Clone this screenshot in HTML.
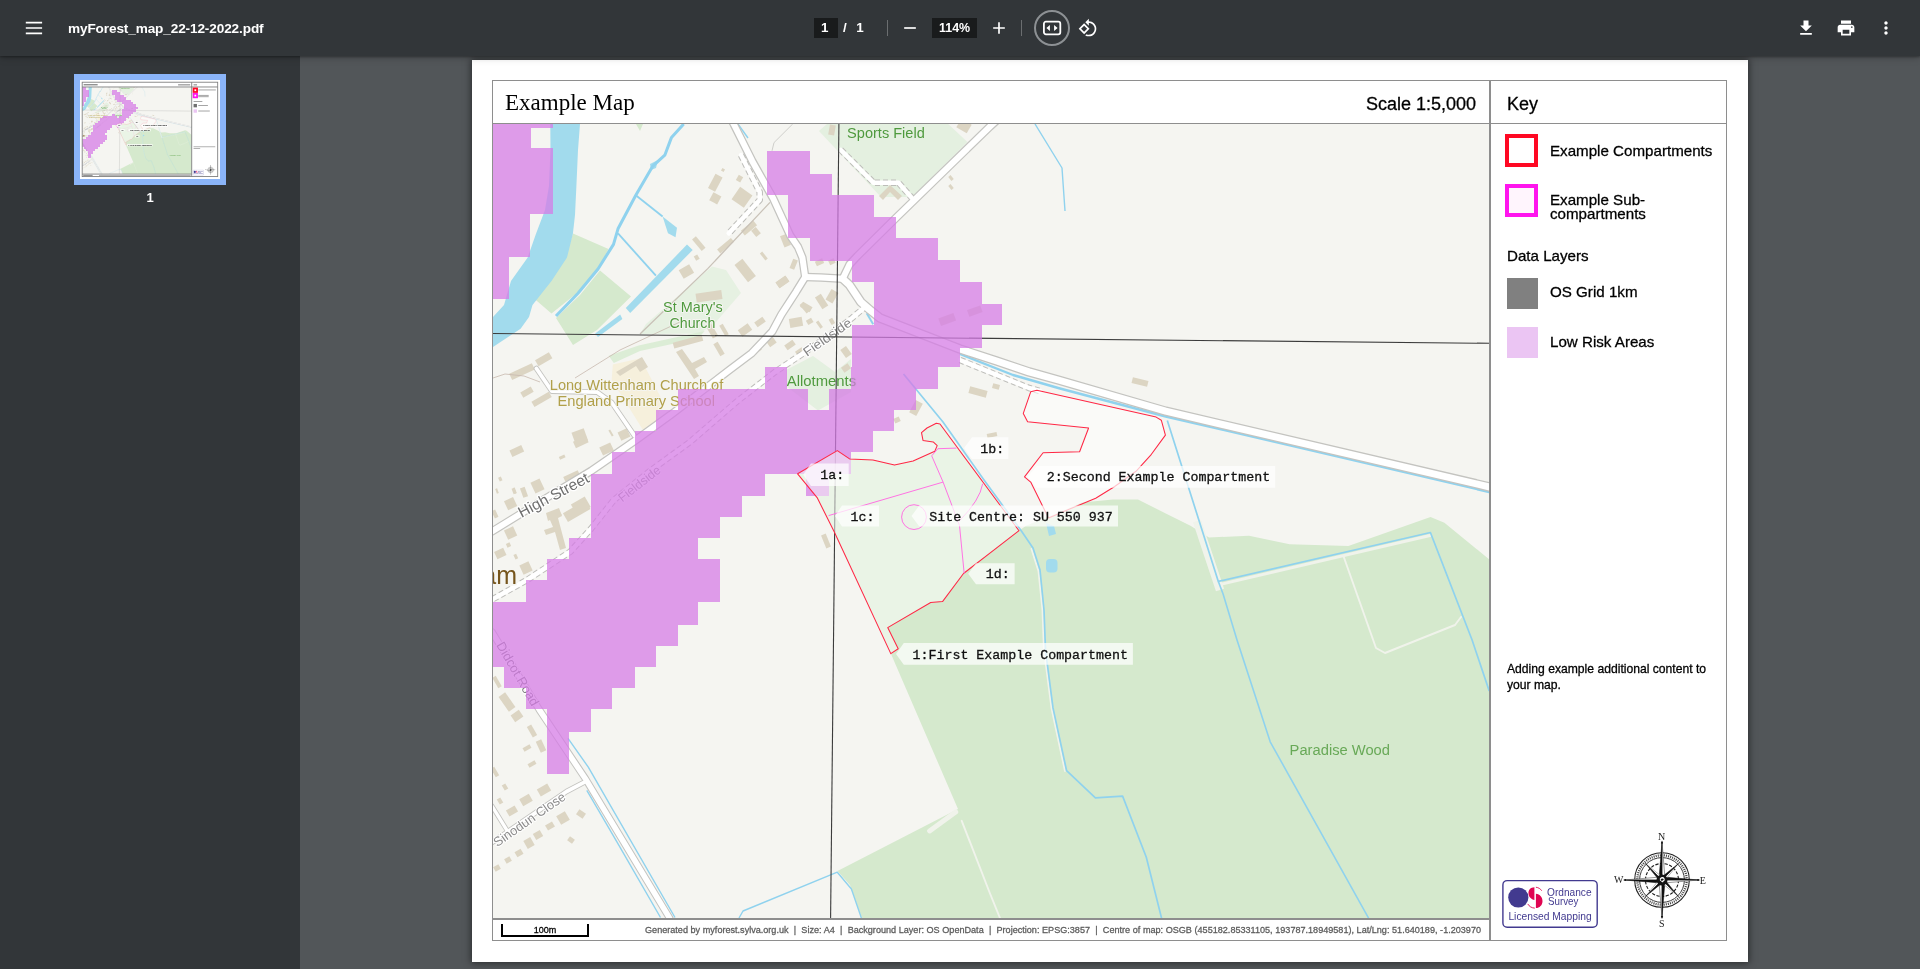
<!DOCTYPE html>
<html lang="en">
<head>
<meta charset="utf-8">
<title>myForest_map_22-12-2022.pdf</title>
<style>
html,body{margin:0;padding:0;}
#toolbar,#sidebar,#page{will-change:transform;}
body{width:1920px;height:969px;overflow:hidden;background:#525659;font-family:"Liberation Sans",sans-serif;position:relative;}
#toolbar{position:absolute;left:0;top:0;width:1920px;height:56px;background:#323639;z-index:5;box-shadow:0 -2px 8px rgba(0,0,0,.09),0 4px 8px rgba(0,0,0,.06),0 1px 2px rgba(0,0,0,.3),0 2px 6px rgba(0,0,0,.15);}
#sidebar{position:absolute;left:0;top:56px;width:300px;height:913px;background:#323639;z-index:3;}
#title{position:absolute;left:68px;top:19.600px;color:#fff;font-size:13.6px;font-weight:bold;letter-spacing:-0.12px;white-space:nowrap;line-height:18px;}
.tb{position:absolute;color:#fff;font-size:13.4px;transform-origin:0 50%;line-height:18px;white-space:nowrap;}
.box{position:absolute;background:#191b1c;}
.sep{position:absolute;width:1px;height:16px;top:20px;background:#6b6e70;}
#page{position:absolute;left:472px;top:60px;width:1276px;height:902px;background:#fff;box-shadow:0 0 7px 1px rgba(0,0,0,.5);z-index:1;}
.ln{position:absolute;background:#8e8e8e;z-index:2;}
.pt{position:absolute;color:#000;white-space:nowrap;-webkit-text-stroke-width:0.28px;}
#thumb{position:absolute;left:74px;top:18px;width:140px;height:99px;border:6px solid #8ab4f8;background:#fff;}
#thumbnum{position:absolute;left:0;top:134px;width:300px;text-align:center;color:#fff;font-size:13px;font-weight:bold;line-height:16px;}
</style>
</head>
<body>

<!-- ================= TOOLBAR ================= -->
<div id="toolbar">
  <svg style="position:absolute;left:0;top:0" width="60" height="56" viewBox="0 0 60 56"><path d="M25.800 21.700h16.300v1.700h-16.300zM25.800 27.150h16.300v1.700h-16.300zM25.800 32.550h16.300v1.700h-16.300z" fill="#fff"/></svg>
  <div id="title">myForest_map_22-12-2022.pdf</div>

  <div class="box" style="left:814px;top:18px;width:24px;height:20px;"></div>
  <div class="tb" style="left:821px;top:19px;font-weight:bold;">1</div>
  <div class="tb" style="left:843px;top:19px;font-weight:bold;word-spacing:1px;">/&nbsp;&nbsp;1</div>
  <div class="sep" style="left:887px;"></div>
  <svg style="position:absolute;left:900px;top:18px" width="20" height="20" viewBox="0 0 24 24"><path d="M19 13H5v-2h14v2z" fill="#fff"/></svg>
  <div class="box" style="left:932px;top:18px;width:45px;height:20px;"></div>
  <div class="tb" style="left:938.5px;top:19px;font-weight:bold;transform:scaleX(.93);">114%</div>
  <svg style="position:absolute;left:989px;top:18px" width="20" height="20" viewBox="0 0 24 24"><path d="M19 13h-6v6h-2v-6H5v-2h6V5h2v6h6v2z" fill="#fff"/></svg>
  <div class="sep" style="left:1021px;"></div>
  <div style="position:absolute;left:1034px;top:10px;width:32px;height:32px;border:2px solid #8d9194;border-radius:50%;"></div>
  <svg style="position:absolute;left:1040px;top:16px" width="24" height="24" viewBox="0 0 24 24"><rect x="3.900" y="5.700" width="16.400" height="12.600" rx="2" fill="none" stroke="#fff" stroke-width="1.800"/><path d="M6.400 12l3.500-2.900v5.800zM17.600 12l-3.500-2.900v5.800z" fill="#fff"/></svg>
  <svg style="position:absolute;left:1078px;top:18px" width="20" height="20" viewBox="0 0 24 24"><path d="M7.340 6.410L.860 12.900l6.490 6.480 6.490-6.480-6.500-6.490zM3.690 12.900l3.660-3.660L11 12.900l-3.660 3.660-3.650-3.660zm15.670-6.260C17.610 4.880 15.300 4 13 4V.760L8.760 5 13 9.240V6c1.790 0 3.580.680 4.950 2.050 2.730 2.730 2.730 7.170 0 9.900C16.580 19.320 14.790 20 13 20c-.970 0-1.940-.210-2.840-.610l-1.490 1.490C10.020 21.620 11.510 22 13 22c2.300 0 4.610-.880 6.360-2.640 3.520-3.510 3.520-9.210 0-12.720z" fill="#fff"/></svg>

  <svg style="position:absolute;left:1796px;top:18px" width="20" height="20" viewBox="0 0 24 24"><path d="M19 9h-4V3H9v6H5l7 7 7-7zM5 18v2h14v-2H5z" fill="#fff"/></svg>
  <svg style="position:absolute;left:1836px;top:18px" width="20" height="20" viewBox="0 0 24 24"><path d="M19 8H5c-1.660 0-3 1.340-3 3v6h4v4h12v-4h4v-6c0-1.660-1.340-3-3-3zm-3 11H8v-5h8v5zm3-7c-.550 0-1-.450-1-1s.450-1 1-1 1 .450 1 1-.450 1-1 1zm-1-9H6v4h12V3z" fill="#fff"/></svg>
  <svg style="position:absolute;left:1876px;top:18px" width="20" height="20" viewBox="0 0 24 24"><path d="M12 8c1.100 0 2-.900 2-2s-.900-2-2-2-2 .900-2 2 .900 2 2 2zm0 2c-1.100 0-2 .900-2 2s.900 2 2 2 2-.900 2-2-.900-2-2-2zm0 6c-1.100 0-2 .900-2 2s.900 2 2 2 2-.900 2-2-.900-2-2-2z" fill="#fff"/></svg>
</div>

<!-- ================= SIDEBAR ================= -->
<div id="sidebar">
  <div id="thumb"><svg width="140" height="99" viewBox="472 60 1276 902" style="display:block">
  <rect x="472" y="60" width="1276" height="902" fill="#fff"/>
  <svg x="493" y="124" width="997" height="794" viewBox="493 124 997 794"><use href="#mapcontent"/></svg>
  <g fill="none" stroke="#7d7d7d" stroke-width="8">
    <rect x="492" y="80" width="1235" height="860"/>
    <path d="M492 123.500H1727M1490 80V940M492 917.500H1490"/>
  </g>
  <rect x="1507" y="137" width="32" height="32" fill="#fff" stroke="#ff0823" stroke-width="16"/>
  <rect x="1507" y="186" width="32" height="32" fill="#fff" stroke="#ff14ee" stroke-width="16"/>
  <rect x="1507" y="278" width="31" height="31" fill="#707070"/>
  <rect x="1507" y="327" width="31" height="31" fill="#ebc5f3"/>
  <g fill="#8a8a8a"><rect x="1550" y="147" width="160" height="7"/><rect x="1550" y="196" width="95" height="7"/><rect x="1550" y="209" width="95" height="7"/><rect x="1507" y="252" width="80" height="7"/><rect x="1550" y="289" width="88" height="7"/><rect x="1550" y="339" width="105" height="7"/><rect x="1507" y="666" width="198" height="6"/><rect x="1507" y="682" width="60" height="6"/><rect x="505" y="97" width="128" height="12"/><rect x="1366" y="99" width="110" height="10"/><rect x="1507" y="99" width="32" height="10"/><rect x="645" y="926" width="836" height="6"/><rect x="501" y="924" width="86" height="10"/></g>
  <svg x="1496" y="874" width="108" height="60" viewBox="0 0 108 60"><use href="#oslogo"/></svg>
  <svg x="1608.300" y="825.800" width="108" height="108" viewBox="-54 -54 108 108"><use href="#compass"/></svg>
</svg>
</div>
  <div id="thumbnum">1</div>
</div>

<!-- ================= PDF PAGE ================= -->
<div id="page">
  <!-- frame lines (page-relative coords = screen - (472,60)) -->
  <div class="ln" style="left:20px;top:20px;width:1235px;height:1px;"></div>
  <div class="ln" style="left:20px;top:880px;width:1235px;height:1px;"></div>
  <div class="ln" style="left:20px;top:20px;width:1px;height:861px;"></div>
  <div class="ln" style="left:1254px;top:20px;width:1px;height:861px;"></div>
  <div class="ln" style="left:20px;top:63px;width:1235px;height:1px;"></div>
  <div class="ln" style="left:1017.200px;top:20px;width:1.700px;height:861px;"></div>
  <div class="ln" style="left:20px;top:858px;width:998px;height:2px;"></div>

  <div class="pt" style="left:33px;top:29px;font-family:'Liberation Serif',serif;font-size:23px;line-height:28px;-webkit-text-stroke-width:0;">Example Map</div>
  <div class="pt" style="left:894px;top:33px;font-size:18px;line-height:22px;">Scale 1:5,000</div>
  <div class="pt" style="left:1035px;top:33px;font-size:18px;line-height:22px;">Key</div>

  <svg id="mapsvg" style="position:absolute;left:21px;top:64px;" width="997" height="794" viewBox="493 124 997 794">
<defs><g id="mapcontent">
<rect x="493" y="124" width="997" height="794" fill="#f5f5f1"/>
<!-- ===== land cover ===== -->
<g id="landcover">
  <!-- main woods (Paradise Wood + compartment 1) -->
  <path fill="#d5e9cd" d="M797.600 473.800L837.300 450.600L849.600 458.900L872.900 459.900L894.500 465.100L913.100 461.100L934.800 451.200L937.200 445.600L933.200 441.900L923 440.400L921.500 432.600L927 428L936.300 423.300L940 424L1019 530.700L1026 525.800L1082 502.500L1113 499.400L1138 499.400L1165.800 513.400L1190.500 525.800L1209 537.500L1249 535.700L1289.600 544.300L1348.400 545.900L1430.500 517.100L1444.400 522.700L1490 560L1490 918L862 918L850 885L837.500 871L958 809L890.800 653.600L834.200 531.700L817.100 497.600Z"/>
  <!-- riverside fields -->
  <path fill="#d5e9cd" d="M573 233.500L608.500 249L600 266L577 293L551.500 313.500L533.500 298L548 283L565 258Z"/>
  <path fill="#d5e9cd" d="M600 270.500L631 296.500L597 330L573 345L556 318L580 295Z"/>
  <path fill="#d5e9cd" d="M636 124L643 124L640 131Z"/>
  <!-- sports field -->
  <path fill="#e4f0e0" d="M819 131L827 124L948.200 124L967.400 142L912 197L881 197Z"/>
  <!-- churchyard -->
  <path fill="#e6f1e2" d="M646 324L712 266.500L726 270L741 293L716 322L700 333.500L640 334Z"/>
  <path fill="#dcedd6" d="M608.700 355.800L638.600 345.500L704.600 331L698.400 338.300L640 351L613.800 363Z"/>
  <!-- allotments -->
  <path fill="#e4f0e0" d="M786 370L813 356L835 372L851 359L851 392L818 410.500L786 386Z"/>
  <!-- school ground -->
  <path fill="#f6f0dc" d="M612.800 364.400L640.600 358.200L661.300 398.400L657.100 423.200L642.700 429.400L611.700 379.800Z"/>
</g>

<!-- ===== woodland rides (off-white) ===== -->
<g fill="none" stroke="#f0f3eb" stroke-width="1.900" stroke-linecap="round" stroke-linejoin="round">
  <path stroke-width="8.500" stroke-linecap="butt" d="M1197 521L1220 590"/>
  <path d="M1343.700 556.700L1376 648L1385 653L1455 625L1461 617"/>
  <path stroke-width="3" d="M1219.500 584.500L1430 535.500"/>
  <path d="M961.700 820.800L989.800 893L1000 918"/>
  <path d="M1031.500 549L1038.500 571L1042.500 610L1044 650L1051.500 708L1065 771"/>
  <path stroke-width="5" d="M929.600 830.900L955.700 812"/>
</g>

<!-- ===== water ===== -->
<g id="water" fill="#a2dbed" stroke="none">
  <!-- Thames -->
  <path d="M550.300 124L580 124L578 150L576.400 186L575 215L572.900 233.700L567 257.500L551.500 281L532.500 305L529 317L520.600 328.700L499 343L493 347L493 317L504 305L511 281L527.700 257.500L536 233.700L545 210L549 186L550.500 150Z"/>
  <!-- canal basin -->
  <path d="M687 244.400L692.700 250L630.200 313L625.800 308Z"/>
  <path d="M620.200 314.600L622.400 319L598 337L595.200 333.600Z"/>
  <path d="M662.600 216.500L677 227.700L675.500 237.300L668 233.300Z"/>
  <path d="M650 164L658 160L656 168L651 170Z"/>
  <rect x="1046" y="559" width="11.500" height="13.500" rx="4"/>
  <path d="M1046 523L1054 526L1056 534L1049 536Z"/>
</g>
<g id="streams" fill="none" stroke="#8fd2ee" stroke-width="1.400" stroke-linejoin="round">
  <path stroke-width="3" d="M683.700 124L671.500 137.400L664.800 155.200L652.500 166.400L635.800 195.300L618 228.800L613.500 244.400L598 269L577.800 293.500L556 316"/>
  <path stroke-width="1.800" d="M635.800 195.300L662.600 216.500"/>
  <path stroke-width="1.800" d="M618 233.300L655.900 275.600"/>
  <path d="M738 124L748 138"/>
  <path d="M1035 124L1062 168L1065 211"/>
  <!-- along SE road -->
  <path stroke-width="2" d="M866.700 313.300L873.200 324.200"/>
  <path stroke-width="2.400" d="M959.900 354L1013 375L1060 388.500L1165.700 416.500L1489.200 492"/>
  <!-- along compartment 1 NE edge, then south through wood -->
  <path stroke-width="1.700" d="M903.500 374L942.800 421.700L984 480L1021.400 531L1033 548L1040 570L1044 610L1045.500 650L1053 707.900L1066.600 770.700L1095.400 797.800L1122.600 796.100L1146.300 857.200L1161.600 918.300"/>
  <path stroke-width="1.700" d="M1167.300 420.500L1218.300 581.400L1430.400 532.500L1472.100 640L1489.200 690.900"/>
  <path stroke-width="1.600" d="M1218.300 581.400L1223 593.800L1237 640L1270.200 741.800L1368.700 918.300"/>
  <!-- Didcot road ditches -->
  <path d="M568 738.300L588.300 767.200L675 917.500"/>
  <path d="M586.800 790.300L617.200 842.300L660.500 917.500"/>
  <!-- bottom -->
  <path d="M739 918L743 911L837.300 872.200L851.400 889L861.400 918"/>
</g>

<!-- ===== buildings ===== -->
<g id="bld" fill="#dcd5c3">
  <rect x="-4" y="-8" width="8" height="16" transform="translate(715.300 182.800) rotate(28)"/>
  <rect x="-4.500" y="-4.500" width="9" height="9" transform="translate(715.300 198.300) rotate(28)"/>
  <rect x="-7.500" y="-7.500" width="15" height="15" transform="translate(742 197.300) rotate(35)"/>
  <rect x="-2.500" y="-3" width="5" height="6" transform="translate(739.500 178.700) rotate(30)"/>
  <rect x="-1.500" y="-1.500" width="3" height="3" transform="translate(723 170) rotate(30)"/>
  <rect x="-2.500" y="-7.500" width="5" height="15" transform="translate(698.800 243.700) rotate(-40)"/>
  <rect x="-6" y="-5" width="12" height="10" transform="translate(686.400 271.500) rotate(-30)"/>
  <rect x="-2" y="-2.500" width="4" height="5" transform="translate(696.700 257.700) rotate(-30)"/>
  <rect x="-2.500" y="-9" width="5" height="18" transform="translate(725.600 245.700) rotate(50)"/>
  <rect x="-3" y="-8" width="6" height="16" transform="translate(749 228) rotate(50)"/>
  <rect x="-4" y="-3" width="8" height="6" transform="translate(756 232) rotate(50)"/>
  <rect x="-5" y="-11" width="10" height="22" transform="translate(745.200 270.500) rotate(-38)"/>
  <rect x="-1.500" y="-4.500" width="3" height="9" transform="translate(763.800 256) rotate(-38)"/>
  <rect x="-6" y="-3.500" width="12" height="7" transform="translate(782.400 281.900) rotate(-35)"/>
  <rect x="-3.500" y="-6" width="7" height="12" transform="translate(785.500 240.600) rotate(-22)"/>
  <rect x="-2.500" y="-5" width="5" height="10" transform="translate(793.700 264.300) rotate(22)"/>
  <rect x="-13" y="-4.500" width="26" height="9" transform="translate(709 296.300) rotate(-8)"/>
  <rect x="-3.500" y="-7" width="7" height="14" transform="translate(821.600 301.500) rotate(-32)"/>
  <rect x="-4" y="-6" width="8" height="12" transform="translate(832 296.300) rotate(30)"/>
  <rect x="-2.500" y="-5.500" width="5" height="11" transform="translate(805 307.700) rotate(-40)"/>
  <rect x="-4" y="-2.500" width="8" height="5" transform="translate(819.500 262.300) rotate(-25)"/>
  <rect x="-3" y="-5" width="6" height="10" transform="translate(832 130) rotate(10)"/>
  <path d="M879 196L890 185L902 196L898 200L890 192L883 200Z"/>
  <rect x="-1.500" y="-2.500" width="3" height="5" transform="translate(951 178) rotate(-40)"/>
  <rect x="-1.500" y="-2.500" width="3" height="5" transform="translate(951 187) rotate(-40)"/>
  <rect x="-6" y="-5" width="12" height="10" transform="translate(964 126) rotate(30)"/>
  <rect x="-8" y="-4" width="16" height="8" transform="translate(947.200 319.600) rotate(-20)"/>
  <rect x="-7" y="-3.500" width="14" height="7" transform="translate(974.800 311.100) rotate(-20)"/>
  <!-- village west -->
  <rect x="-8" y="-3.500" width="16" height="7" transform="translate(543.700 359.200) rotate(-30)"/>
  <rect x="-12.500" y="-3.500" width="25" height="7" transform="translate(522 371.600) rotate(-25)"/>
  <rect x="-6" y="-3" width="12" height="6" transform="translate(527 392.200) rotate(-30)"/>
  <rect x="-10" y="-3" width="20" height="6" transform="translate(541.600 399.400) rotate(-30)"/>
  <rect x="-6.500" y="-6.500" width="13" height="13" transform="translate(579.800 436.600) rotate(-20)"/>
  <rect x="-6.500" y="-3.500" width="13" height="7" transform="translate(516.800 451) rotate(-25)"/>
  <rect x="-3" y="-1.500" width="6" height="3" transform="translate(562.200 457.200) rotate(-25)"/>
  <rect x="-6" y="-4.500" width="12" height="9" transform="translate(606.600 449) rotate(-25)"/>
  <rect x="-5" y="-4.500" width="10" height="9" transform="translate(624 434.500) rotate(-25)"/>
  <rect x="-1" y="-3.500" width="2" height="7" transform="translate(611 433) rotate(-30)"/>
  <rect x="-8" y="-2.500" width="16" height="5" transform="translate(571.500 475.800) rotate(-25)"/>
  <rect x="-5" y="-6" width="10" height="12" transform="translate(537.500 486) rotate(-25)"/>
  <rect x="-2.500" y="-5" width="5" height="10" transform="translate(524 492.300) rotate(-20)"/>
  <rect x="-5" y="-5" width="10" height="10" transform="translate(510.600 503.700) rotate(-25)"/>
  <rect x="-1.500" y="-2" width="3" height="4" transform="translate(500.300 479) rotate(-25)"/>
  <rect x="-1" y="-2.500" width="2" height="5" transform="translate(497 491) rotate(-20)"/>
  <rect x="-1.500" y="-3" width="3" height="6" transform="translate(514 491) rotate(-20)"/>
  <rect x="-8" y="-6" width="16" height="12" transform="translate(580.800 505.700) rotate(-30)"/>
  <rect x="-5" y="-3" width="10" height="6" transform="translate(556 515) rotate(-30)"/>
  <!-- school + north of high street -->
  <path d="M616 372L642 357L648 367L640 372L636 366L620 376Z"/>
  <rect x="-15" y="-3" width="30" height="6" transform="translate(688 341.700) rotate(-15)"/>
  <rect x="-2.500" y="-7" width="5" height="14" transform="translate(719 349) rotate(-30)"/>
  <path d="M676 352L682 349L692 363L704 357L707 362L695 369L699 376L694 379Z"/>
  <rect x="-3" y="-7" width="6" height="14" transform="translate(712 331) rotate(-30)"/>
  <rect x="-2" y="-6" width="4" height="12" transform="translate(724 330) rotate(-30)"/>
  <rect x="-6" y="-4" width="12" height="8" transform="translate(745 330) rotate(-35)"/>
  <rect x="-5" y="-3" width="10" height="6" transform="translate(760 322) rotate(-35)"/>
  <!-- east of allotments / road -->
  <rect x="-8" y="-3" width="16" height="6" transform="translate(1140 382) rotate(14)"/>
  <rect x="-9" y="-3.500" width="18" height="7" transform="translate(978 392) rotate(15)"/>
  <rect x="-3.500" y="-2.500" width="7" height="5" transform="translate(996 386.500) rotate(15)"/>
  <rect x="-4" y="-7" width="8" height="14" transform="translate(916 408) rotate(28)"/>
  <rect x="-3" y="-2.500" width="6" height="5" transform="translate(897 420) rotate(-25)"/>
  <rect x="-5" y="-2" width="10" height="4" transform="translate(992 435) rotate(-12)"/>
  <rect x="-2.500" y="-7" width="5" height="14" transform="translate(826 541) rotate(-22)"/>

  <!-- extra: junction area -->
  <rect x="-5.500" y="-3" width="11" height="6" transform="translate(806.300 307) rotate(30)"/>
  <rect x="-6.500" y="-4.500" width="13" height="9" transform="translate(796 322.400) rotate(-10)"/>
  <rect x="-3" y="-2.500" width="6" height="5" transform="translate(809.700 321.300) rotate(-30)"/>
  <rect x="-1.500" y="-4" width="3" height="8" transform="translate(819.400 324.700) rotate(-35)"/>
  <rect x="-2" y="-3" width="4" height="6" transform="translate(831.900 321.300) rotate(-30)"/>
  <rect x="-3" y="-2.500" width="6" height="5" transform="translate(831.900 261.700) rotate(-25)"/>
  <rect x="-6" y="-3.500" width="12" height="7" transform="translate(782.500 282) rotate(-35)"/>
  <rect x="-4" y="-6" width="8" height="12" transform="translate(770 340) rotate(-35)"/>
  <rect x="-5" y="-3" width="10" height="6" transform="translate(756 350) rotate(-35)"/>
  <rect x="-5" y="-3" width="10" height="6" transform="translate(790 345) rotate(-35)"/>
  <rect x="-4" y="-3" width="8" height="6" transform="translate(800 352) rotate(-35)"/>
  <rect x="-3.500" y="-5" width="7" height="10" transform="translate(846 352) rotate(-35)"/>
  <rect x="-4" y="-3" width="8" height="6" transform="translate(846 368) rotate(-35)"/>
  <!-- extra: high street south side -->
  <rect x="-7" y="-3.500" width="14" height="7" transform="translate(580.800 442) rotate(-25)"/>
  <rect x="-13" y="-5" width="26" height="10" transform="translate(576.700 511.200) rotate(-30)"/>
  <path d="M546 513L559 508L562 516L558 518L566 548L560 550L555 532L546 535L544 530L553 527L550 520L548 521Z"/>
  <rect x="-5" y="-5" width="10" height="10" transform="translate(510.600 533) rotate(-25)"/>
  <rect x="-2" y="-2" width="4" height="4" transform="translate(508.500 545) rotate(-25)"/>
  <rect x="-5" y="-4" width="10" height="8" transform="translate(500.300 553.500) rotate(-25)"/>
  <rect x="-1.500" y="-2.500" width="3" height="5" transform="translate(515.800 556.600) rotate(-25)"/>
  <rect x="-5" y="-5" width="10" height="10" transform="translate(526 568) rotate(-25)"/>
  <rect x="-2" y="-4" width="4" height="8" transform="translate(495 514) rotate(-25)"/>
  <rect x="-1" y="-3" width="2" height="6" transform="translate(514.800 490.600) rotate(-20)"/>
  <!-- sinodun spur -->
  <!-- Didcot Road / Sinodun Close -->
  <rect x="-4" y="-9" width="8" height="18" transform="translate(507 702) rotate(-35)"/>
  <rect x="-5" y="-4" width="10" height="8" transform="translate(517 716) rotate(-35)"/>
  <rect x="-2.500" y="-6" width="5" height="12" transform="translate(532 731) rotate(-30)"/>
  <rect x="-3" y="-6" width="6" height="12" transform="translate(541 746) rotate(-25)"/>
  <rect x="-4" y="-2" width="8" height="4" transform="translate(527 748) rotate(-30)"/>
  <rect x="-4" y="-2" width="8" height="4" transform="translate(532 764) rotate(-30)"/>
  <rect x="-2" y="-6" width="4" height="12" transform="translate(497 682) rotate(-30)"/>
  <rect x="-2" y="-5" width="4" height="10" transform="translate(495 772) rotate(-30)"/>
  <rect x="-2" y="-3" width="4" height="6" transform="translate(505 787) rotate(-30)"/>
  <rect x="-6" y="-4" width="12" height="8" transform="translate(544 790) rotate(-30)"/>
  <rect x="-5.500" y="-4" width="11" height="8" transform="translate(526 800) rotate(-30)"/>
  <rect x="-5" y="-3.500" width="10" height="7" transform="translate(512 811) rotate(-30)"/>
  <rect x="-2" y="-3" width="4" height="6" transform="translate(500 801) rotate(-30)"/>
  <rect x="-5" y="-5" width="10" height="10" transform="translate(563 818) rotate(-30)"/>
  <rect x="-4" y="-3" width="8" height="6" transform="translate(550 826) rotate(-30)"/>
  <rect x="-4" y="-3.500" width="8" height="7" transform="translate(538 835) rotate(-30)"/>
  <rect x="-4" y="-4.500" width="8" height="9" transform="translate(529 843) rotate(-30)"/>
  <rect x="-3.500" y="-3" width="7" height="6" transform="translate(519 853) rotate(-30)"/>
  <rect x="-3" y="-2.500" width="6" height="5" transform="translate(508 860) rotate(-30)"/>
  <rect x="-3" y="-2.500" width="6" height="5" transform="translate(497 868) rotate(-30)"/>
  <rect x="-4" y="-3" width="8" height="6" transform="translate(581 814) rotate(35)"/>
  <rect x="-3" y="-2.500" width="6" height="5" transform="translate(571 840) rotate(35)"/>
</g>

<!-- ===== paths / tracks (thin) ===== -->
<g fill="none" stroke="#c9c2b8" stroke-width="1.300">
  <path d="M770 202.400L708 268.400L650.300 324L640 334"/>
  <path stroke="#cfcfcb" stroke-width="1" d="M792.700 124L774 142.600L772 150.800"/>
  <path stroke="#c8b9ae" stroke-width="0.800" d="M493 378L505 374L524 376L540 382"/>
  <path stroke="#c8b9ae" stroke-width="0.800" d="M575 378L620 350L680 322"/>
</g>

<!-- ===== roads ===== -->
<g id="roads" fill="none" stroke-linecap="round" stroke-linejoin="round">
  <!-- casings -->
  <g stroke="#c4c4c0">
    <path stroke-width="8.500" d="M492 531.500L553.600 493.500L591 471L634.500 441L670.700 414.800L729.200 370.200L751.500 353.400L772.300 331.500L781.400 314.500L796.100 291.800L805.200 277L802.400 257.700L798 247L790.200 235.500L773.100 198.300L752.300 161.200L733.700 124L732 121"/>
    <path stroke-width="8.500" d="M805.200 277L821.100 277.600L842.700 278.700L849.500 264.500L857.400 256L896.400 217.500L990 126.500L996 121"/>
    <path stroke-width="9.500" d="M842.700 278.700L849.500 285L860.800 302L870 310L880 318L959.900 349L996.700 361L1029 371.900L1060 380.500L1165.700 411.200L1492 487.500"/>
    <path stroke-width="7.500" d="M492 632L539.100 709.400L585.400 778.700L669.200 917.500L671 921"/>
    <path stroke-width="5.500" d="M585.400 781.600L566.600 791.500L492 842.500"/>
    <path stroke-width="5" d="M492 806L507.300 830.800"/>
    <path stroke-width="5.500" d="M634.400 435.600L611.700 402.500L597.300 392.200L551.900 391.200L536.400 368.500"/>
  </g>
  <!-- dashed-casing minor roads -->
  <g stroke="#bdbdb9" stroke-width="6.500" stroke-dasharray="5 3" stroke-linecap="butt">
    <path d="M741 155L759.700 192L759.700 200L728.700 233.400"/>
    <path d="M840.700 149.800L873.700 182.800L898.500 182.800L911.700 197.700"/>
    <path d="M493 599L527 580L570.500 551.500L591 528.800L613.900 500L650 471L690 442L737.500 401L775 372L806 351.500L838 329L852 318L863 308.800"/>
    <path d="M960 360L1029 388L1040 391"/>
  </g>
  <!-- fills -->
  <g stroke="#ffffff">
    <path stroke-width="4.500" d="M741 155L759.700 192L759.700 200L728.700 233.400"/>
    <path stroke-width="4.500" d="M840.700 149.800L873.700 182.800L898.500 182.800L911.700 197.700"/>
    <path stroke-width="4.500" d="M493 599L527 580L570.500 551.500L591 528.800L613.900 500L650 471L690 442L737.500 401L775 372L806 351.500L838 329L852 318L863 308.800"/>
    <path stroke-width="4.500" d="M960 360L1029 388L1040 391"/>
    <path stroke-width="6" d="M492 531.500L553.600 493.500L591 471L634.500 441L670.700 414.800L729.200 370.200L751.500 353.400L772.300 331.500L781.400 314.500L796.100 291.800L805.200 277L802.400 257.700L798 247L790.200 235.500L773.100 198.300L752.300 161.200L733.700 124L732 121"/>
    <path stroke-width="6" d="M805.200 277L821.100 277.600L842.700 278.700L849.500 264.500L857.400 256L896.400 217.500L990 126.500L996 121"/>
    <path stroke-width="7" d="M842.700 278.700L849.500 285L860.800 302L870 310L880 318L959.900 349L996.700 361L1029 371.900L1060 380.500L1165.700 411.200L1492 487.500"/>
    <path stroke-width="5.500" d="M492 632L539.100 709.400L585.400 778.700L669.200 917.500L671 921"/>
    <path stroke-width="3.800" d="M585.400 781.600L566.600 791.500L492 842.500"/>
    <path stroke-width="3.300" d="M492 806L507.300 830.800"/>
    <path stroke-width="3.800" d="M634.400 435.600L611.700 402.500L597.300 392.200L551.900 391.200L536.400 368.500"/>
  </g>
</g>

<!-- ===== base-map labels ===== -->
<g id="baselabels" font-family="'Liberation Sans',sans-serif" paint-order="stroke" stroke="#f5f5f1" stroke-width="2" stroke-linejoin="round">
  <text x="847.100" y="138" font-size="14.500" fill="#4f9a3e" textLength="77.700" lengthAdjust="spacingAndGlyphs" stroke="#e4f0e0">Sports Field</text>
  <text x="663.100" y="312.200" font-size="14.500" fill="#4f9a3e" textLength="59.700" lengthAdjust="spacingAndGlyphs">St Mary's</text>
  <text x="669.600" y="327.800" font-size="14.500" fill="#4f9a3e" textLength="45.700" lengthAdjust="spacingAndGlyphs">Church</text>
  <text x="786.800" y="385.700" font-size="14.500" fill="#4f9a3e" textLength="69.300" lengthAdjust="spacingAndGlyphs" stroke="#e4f0e0">Allotments</text>
  <text x="549.800" y="389.800" font-size="14.500" fill="#b1a04a" textLength="173.400" lengthAdjust="spacingAndGlyphs">Long Wittenham Church of</text>
  <text x="557.500" y="405.500" font-size="14.500" fill="#b1a04a" textLength="157.500" lengthAdjust="spacingAndGlyphs">England Primary School</text>
  <text x="1289.600" y="754.600" font-size="15.500" fill="#68a957" textLength="100.400" lengthAdjust="spacingAndGlyphs" stroke="#d5e9cd">Paradise Wood</text>
  <text x="517" y="584" font-size="25" fill="#76551c" text-anchor="end" stroke-width="3">ham</text>
  <text transform="translate(521.500 518) rotate(-28)" font-size="15.500" fill="#6f6f6f" textLength="78" lengthAdjust="spacingAndGlyphs" stroke="#ffffff" stroke-width="2.500">High Street</text>
  <text transform="translate(807 357) rotate(-35)" font-size="13" fill="#858585" textLength="56" lengthAdjust="spacingAndGlyphs" stroke="#ffffff">Fieldside</text>
  <text transform="translate(642 487) rotate(-38)" font-size="12.500" fill="#9a9a9a" text-anchor="middle" stroke="#ffffff">Fieldside</text>
  <text transform="translate(514 676) rotate(60)" font-size="13" fill="#7a7a7a" text-anchor="middle" stroke="#ffffff">Didcot Road</text>
  <text transform="translate(532 823) rotate(-35)" font-size="13" fill="#8c8c8c" text-anchor="middle" stroke="#ffffff">Sinodun Close</text>
</g>

<g stroke="#3c3c3c" stroke-width="1.1" fill="none"><path d="M838.900 124L830.600 918"/><path d="M493 333.500L1490 343.300"/></g>
<path id="purple" fill="#d57be5" fill-opacity="0.74" shape-rendering="crispEdges" d="M767.3 151.0H810.2V174.0H767.3ZM767.3 173.7H832.2V195.4H767.3ZM788.2 195.1H873.6V217.3H788.2ZM788.2 217.0H895.7V238.3H788.2ZM810.2 238.0H938.3V260.5H810.2ZM851.8 260.2H959.6V282.1H851.8ZM873.6 281.8H981.7V304.5H873.6ZM873.6 304.2H1001.8V325.3H873.6ZM851.8 325.0H981.7V347.7H851.8ZM851.8 347.4H959.6V367.4H851.8ZM765.1 367.1H786.8V388.8H765.1ZM850.7 367.1H937.5V388.8H850.7ZM677.9 388.5H808.1V410.2H677.9ZM829.0 388.5H916.1V410.2H829.0ZM656.1 409.9H893.8V431.3H656.1ZM634.9 431.0H872.7V452.3H634.9ZM612.4 452.0H850.7V474.3H612.4ZM591.0 474.0H765.1V496.3H591.0ZM806.4 474.0H829.0V496.3H806.4ZM591.0 496.0H742.3V517.3H591.0ZM591.0 517.0H720.3V538.4H591.0ZM569.2 538.1H698.2V559.3H569.2ZM547.0 559.0H720.3V580.3H547.0ZM525.7 580.0H720.3V602.3H525.7ZM493.0 602.0H698.2V624.6H493.0ZM493.0 624.3H677.9V645.8H493.0ZM493.0 645.5H656.1V666.6H493.0ZM504.1 666.3H634.9V687.8H504.1ZM525.7 687.5H612.4V709.3H525.7ZM547.0 709.0H591.0V731.6H547.0ZM547.0 731.3H569.2V752.9H547.0ZM547.0 752.6H569.2V774.3H547.0ZM493 124H553.2V127.6H493ZM493 127.6H530.8V148.3H493ZM493 148.2H553.2V213.7H493ZM493 213.6H530.1V256.9H493ZM493 256.8H508.7V299H493Z"/>
<!-- ===== compartments ===== -->
<g fill="#ffffff" fill-opacity="0.5" stroke="#ff2745" stroke-width="1.050" stroke-linejoin="round">
  <path d="M797.600 473.800L837.300 450.600L849.600 458.900L872.900 459.900L894.500 465.100L913.100 461.100L934.800 451.200L937.200 445.600L933.200 441.900L923 440.400L921.500 432.600L927 428L936.300 423.300L940 424L1019 530.700L963.500 573.500L942.500 601.600L930.700 602.500L887.700 627.600L898.200 648.700L890.800 653.600L834.200 531.700L817.100 497.600Z"/>
  <path d="M1036.900 390.200L1030.700 391.800L1023.300 413.400L1027.600 421.800L1088.600 428L1079.600 451.800L1043.100 452.700L1024.500 476.900L1030.700 482.100L1048.500 518L1067.900 509.700L1095.700 498.200L1114.300 486.800L1136 471.300L1151.400 454.300L1165.400 435.100L1161.300 420.200L1156.100 417.100Z"/>
</g>
<!-- sub-compartments -->
<g fill="none" stroke="#ff73e3" stroke-width="1">
  <path d="M828.600 515.600L943.100 482.100"/>
  <path d="M956.400 448.100L937.900 448.700L931.700 455.800L943.100 482.100L959.500 525.500L964.200 573.500"/>
  <path d="M982.700 483.700Q980 500 959.500 520.800"/>
  <circle cx="914" cy="517.100" r="12.400"/>
</g>

<!-- ===== labels ===== -->
<g font-family="'Liberation Mono',monospace" font-size="13.300" fill="#111" stroke="#111" stroke-width=".3">
  <g fill="#ffffff" fill-opacity="0.72" stroke="none">
    <path d="M803.200 474.700L811 463.600H848.700V485.900H811Z"/>
    <path d="M964 448.100L972 437.300H1008.400V459H972Z"/>
    <path d="M835 516L842 505.400H879V526.400H842Z"/>
    <path d="M911.500 516L919.300 505.400H1118V526.400H919.300Z"/>
    <path d="M968.200 573.700L976 563.200H1014.600V584.300H976Z"/>
    <path d="M1027.600 476.800L1036.900 466H1275.200V487.700H1036.900Z"/>
    <path d="M896 654L903.800 643.100H1132.900V664.800H903.800Z"/>
  </g>
  <text x="820.200" y="479.300">1a:</text>
  <text x="980.300" y="452.800">1b:</text>
  <text x="850.600" y="520.500">1c:</text>
  <text x="929.200" y="520.500">Site Centre: SU 550 937</text>
  <text x="985.800" y="578.300">1d:</text>
  <text x="1046.800" y="481.300">2:Second Example Compartment</text>
  <text x="912.500" y="658.500">1:First Example Compartment</text>
</g>

</g></defs>
<use href="#mapcontent"/>
</svg>

    <!-- KEY panel (page-relative coords) -->
  <div style="position:absolute;left:1033px;top:74px;width:25.400px;height:25.400px;border:4.600px solid #ff0823;background:#fff;"></div>
  <div class="pt" style="left:1078px;top:82px;font-size:15.150px;line-height:18px;">Example Compartments</div>
  <div style="position:absolute;left:1033px;top:123.500px;width:25.400px;height:25.400px;border:4.600px solid #ff14ee;background:#fff5fd;"></div>
  <div class="pt" style="left:1078px;top:133px;font-size:15.150px;line-height:14px;white-space:normal;width:120px;">Example Sub-<br>compartments</div>
  <div class="pt" style="left:1035px;top:187px;font-size:15.150px;line-height:18px;">Data Layers</div>
  <div style="position:absolute;left:1035px;top:218px;width:31px;height:31px;background:#808080;"></div>
  <div class="pt" style="left:1078px;top:223px;font-size:15.150px;line-height:18px;">OS Grid 1km</div>
  <div style="position:absolute;left:1035px;top:267px;width:31px;height:31px;background:#ebc5f3;"></div>
  <div class="pt" style="left:1078px;top:273px;font-size:15.150px;line-height:18px;">Low Risk Areas</div>
  <div class="pt" style="left:1035px;top:601px;font-size:12.150px;line-height:16px;white-space:normal;width:215px;">Adding example additional content to your map.</div>

  <!-- OS logo : svg origin = screen (1496,874) -> page (1024,814) -->
  <svg style="position:absolute;left:1024px;top:814px;" width="108" height="60" viewBox="0 0 108 60"><g id="oslogo">
    <rect x="6.900" y="6.600" width="94.300" height="46.700" rx="4.300" fill="#fff" stroke="#423a8f" stroke-width="1.400"/>
    <circle cx="22.300" cy="23.500" r="10.100" fill="#423a8f"/>
    <g fill="#e00552">
      <path d="M38.400 13.300C34.500 13.300 32.300 16.200 32.500 19.500C32.700 23 35.300 25.200 38.400 26Z"/>
      <path d="M39.900 19.800C44 20.300 46.600 23.400 46.500 27.200C46.400 31.200 43.600 33.900 39.900 34.100Z"/>
    </g>
    <g fill="none" stroke="#e00552" stroke-width=".9" stroke-linecap="round">
      <path d="M40.300 13.300C42.500 13.600 44.300 14.700 45.500 16.400"/>
      <path d="M32 30.300C33.400 32.700 35.700 33.900 38.400 34.100"/>
    </g>
    <g font-family="'Liberation Sans',sans-serif" fill="#423a8f" font-size="10.300">
      <text x="51" y="22.300" textLength="44.600" lengthAdjust="spacingAndGlyphs">Ordnance</text>
      <text x="52" y="31.300" textLength="30.400" lengthAdjust="spacingAndGlyphs">Survey</text>
      <text x="12.400" y="45.800" textLength="83.300" lengthAdjust="spacingAndGlyphs">Licensed Mapping</text>
    </g>
  </g></svg>

  <!-- compass rose : centre = screen (1662.3,879.8) -> page (1190.3,819.8) -->
  <svg style="position:absolute;left:1136.300px;top:765.800px;" width="108" height="108" viewBox="-54 -54 108 108"><g id="compass">
    <g fill="none">
      <circle r="27.300" stroke="#222" stroke-width="1.100"/>
      <circle r="24.700" stroke="#4a4a4a" stroke-width="2.300" stroke-dasharray="1.050 1.050"/>
      <circle r="22.400" stroke="#222" stroke-width=".9"/>
      <circle r="16.500" stroke="#1c1c1c" stroke-width="1.100" stroke-dasharray="3.200 1.500"/>
    </g>
    <g id="cp">
      <g id="cpm"><path d="M0 -38.200L2.700 -5L0 0Z" fill="#fff" stroke="#333" stroke-width=".5" stroke-linejoin="round"/><path d="M0 -38.200L-2.700 -5L0 0Z" fill="#111" stroke="#111" stroke-width=".5" stroke-linejoin="round"/><path d="M0 -39.600L-1.100 -36.600H1.100Z" fill="#111"/></g>
      <g transform="rotate(90)"><path d="M0 -37L2.700 -5L0 0Z" fill="#fff" stroke="#333" stroke-width=".5"/><path d="M0 -37L-2.700 -5L0 0Z" fill="#111" stroke="#111" stroke-width=".5"/><path d="M0 -38.400L-1.100 -35.400H1.100Z" fill="#111"/></g>
      <g transform="rotate(180)"><path d="M0 -37.600L2.700 -5L0 0Z" fill="#fff" stroke="#333" stroke-width=".5"/><path d="M0 -37.600L-2.700 -5L0 0Z" fill="#111" stroke="#111" stroke-width=".5"/><path d="M0 -39L-1.100 -36H1.100Z" fill="#111"/></g>
      <g transform="rotate(270)"><path d="M0 -37.600L2.700 -5L0 0Z" fill="#fff" stroke="#333" stroke-width=".5"/><path d="M0 -37.600L-2.700 -5L0 0Z" fill="#111" stroke="#111" stroke-width=".5"/><path d="M0 -39L-1.100 -36H1.100Z" fill="#111"/></g>
      <g id="cpd" transform="rotate(45)"><path d="M0 -23.300L1.900 -5L0 0Z" fill="#fff" stroke="#444" stroke-width=".4"/><path d="M0 -23.300L-1.900 -5L0 0Z" fill="#111" stroke="#111" stroke-width=".4"/></g>
      <g transform="rotate(135)"><path d="M0 -23.300L1.900 -5L0 0Z" fill="#fff" stroke="#444" stroke-width=".4"/><path d="M0 -23.300L-1.900 -5L0 0Z" fill="#111" stroke="#111" stroke-width=".4"/></g>
      <g transform="rotate(225)"><path d="M0 -23.300L1.900 -5L0 0Z" fill="#fff" stroke="#444" stroke-width=".4"/><path d="M0 -23.300L-1.900 -5L0 0Z" fill="#111" stroke="#111" stroke-width=".4"/></g>
      <g transform="rotate(315)"><path d="M0 -23.300L1.900 -5L0 0Z" fill="#fff" stroke="#444" stroke-width=".4"/><path d="M0 -23.300L-1.900 -5L0 0Z" fill="#111" stroke="#111" stroke-width=".4"/></g>
    </g>
    <circle r="5.500" fill="#141414"/>
    <path d="M-2.200 -1.600Q-.5 -3.400 1.600 -2.800Q3.200 -1.400 2.700 .4Q1.600 .6 1.100 2.200Q-.2 2.800 -.8 1.200Q-2.600 .8 -2.200 -1.600Z" fill="#fff"/>
    <path d="M-1.300 -1Q.5 -2.200 1.900 -.8Q.8 1.200 -.9 .7Z" fill="#141414"/>
    <g font-family="'Liberation Serif',serif" font-size="10" fill="#222" text-anchor="middle">
      <text x="-.3" y="-39.900">N</text><text x="-.3" y="47.400">S</text><text x="-43.200" y="3.300">W</text><text x="40.800" y="3.600">E</text>
    </g>
  </g></svg>

    <!-- scale bar + footer text -->
  <div style="position:absolute;left:29px;top:864px;width:84px;height:11px;border:2px solid #000;border-top:none;"></div>
  <div class="pt" style="left:29px;top:865px;width:88px;text-align:center;font-size:9px;line-height:10px;">100m</div>
  <div class="pt" style="left:173px;top:864px;font-size:9.080px;line-height:12px;color:#5c5c5c;width:836px;text-align:right;word-spacing:0.100px;">Generated by myforest.sylva.org.uk &nbsp;|&nbsp; Size: A4 &nbsp;|&nbsp; Background Layer: OS OpenData &nbsp;|&nbsp; Projection: EPSG:3857 &nbsp;|&nbsp; Centre of map: OSGB (455182.85331105, 193787.18949581), Lat/Lng: 51.640189, -1.203970</div>

</div>

</body>
</html>
